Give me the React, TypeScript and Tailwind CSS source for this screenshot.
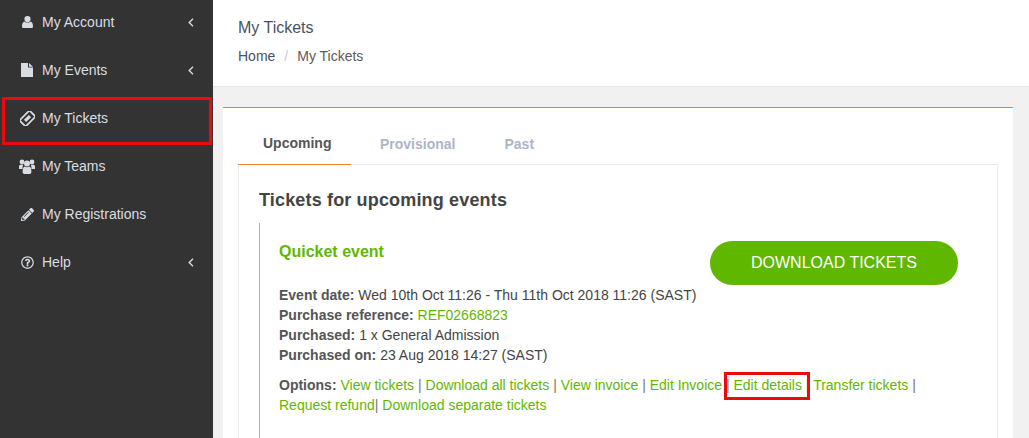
import React from 'react';
import { FaPencilAlt, FaRegQuestionCircle } from 'react-icons/fa';

const UserIcon = () => (
  <svg width="11" height="12" viewBox="0 0 11 12" fill="currentColor">
    <circle cx="5.5" cy="3.1" r="3.1" />
    <path d="M0 10.4C0 8 .7 5.9 2.3 5.4 3.2 6.2 4.3 6.6 5.5 6.6S7.8 6.2 8.7 5.4C10.3 5.9 11 8 11 10.4 11 11.4 10.3 12 9.4 12H1.6C.7 12 0 11.4 0 10.4Z" />
  </svg>
);

const FileIcon = () => (
  <svg width="12" height="14" viewBox="0 0 12 14" fill="currentColor">
    <path d="M0 0H7V4.6H12V14H0Z" />
    <path d="M8 0 12 3.7H8Z" />
  </svg>
);

const TicketIcon = () => (
  <svg width="15" height="15" viewBox="0 0 15 15">
    <g transform="rotate(-45 7.5 7.5)">
      <rect x="0.5" y="3.2" width="14" height="8.6" rx="1" fill="none" stroke="currentColor" strokeWidth="1.8" />
      <rect x="4" y="5.9" width="7" height="3.2" fill="currentColor" />
    </g>
  </svg>
);

const TeamIcon = () => (
  <svg width="16" height="15" viewBox="0 0 16 15" fill="currentColor">
    <circle cx="3" cy="3" r="2.4" />
    <circle cx="13" cy="3" r="2.4" />
    <path d="M0 10V7.5C0 6.3.8 5.8 2 5.8H4.2C3.6 7 3.4 8.5 3.6 10Z" />
    <path d="M16 10V7.5C16 6.3 15.2 5.8 14 5.8H11.8C12.4 7 12.6 8.5 12.4 10Z" />
    <circle cx="8" cy="4.6" r="3" />
    <path d="M3.6 13C3.6 9.8 4.4 7.8 5.8 7.6 7 8.6 9 8.6 10.2 7.6 11.6 7.8 12.4 9.8 12.4 13 12.4 14.2 11.6 15 10.6 15H5.4C4.4 15 3.6 14.2 3.6 13Z" />
  </svg>
);

const AngleLeft = () => (
  <svg className="ml-auto mr-[1px]" width="6" height="9" viewBox="0 0 6 9" fill="none" stroke="currentColor" strokeWidth="1.4">
    <path d="M5 .8 1.2 4.5 5 8.2" />
  </svg>
);

const menu = [
  { icon: <UserIcon />, label: 'My Account', arrow: true },
  { icon: <FileIcon />, label: 'My Events', arrow: true },
  { icon: <TicketIcon />, label: 'My Tickets', arrow: false, active: true },
  { icon: <TeamIcon />, label: 'My Teams', arrow: false },
  { icon: <FaPencilAlt className="text-[13px]" />, label: 'My Registrations', arrow: false },
  { icon: <FaRegQuestionCircle className="text-[13px]" />, label: 'Help', arrow: true },
];

const Sep = () => <span className="text-[#777]"> | </span>;

const App: React.FC = () => {
  return (
    <div className="flex h-[438px] w-[1029px] overflow-hidden bg-[#f1f1f1] font-['Liberation_Sans',Arial,sans-serif] text-[14px] text-[#444]">
      {/* Sidebar */}
      <aside className="w-[213px] shrink-0 bg-[#333333]">
        <ul className="-mt-[2px]">
          {menu.map((item) => (
            <li key={item.label} className="relative flex h-[48px] items-center pl-[19px] pr-[18px] text-[14px] text-[#d9dde3]">
              <span className="flex w-[23px] shrink-0 items-center justify-center pr-[7px]">{item.icon}</span>
              <span>{item.label}</span>
              {item.arrow && <AngleLeft />}
              {item.active && (
                <span className="absolute left-[2px] top-[3px] h-[48px] w-[210px] border-[3px] border-[#ee0a0a]" />
              )}
            </li>
          ))}
        </ul>
      </aside>

      <main className="min-w-0 flex-1">
        {/* Page header */}
        <header className="h-[87px] border-b border-[#e6e6e6] bg-white pl-[25px] pt-[17px]">
          <h1 className="text-[16px] leading-[22px] text-[#49525e]">My Tickets</h1>
          <nav className="mt-[7px] flex items-center leading-[20px]">
            <span className="text-[#49525e]">Home</span>
            <span className="mx-[9px] text-[#c8cbd0]">/</span>
            <span className="text-[#5f5a5a]">My Tickets</span>
          </nav>
        </header>

        {/* Portlet */}
        <section className="ml-[10px] mr-[16px] mt-[20px] h-[400px] border-t border-[#f08128] bg-white px-[15px] pt-[20px]">
          <div className="flex h-[37px] border-b border-[#e7ecf1] font-bold">
            <div className="-mb-px w-[113px] border-b border-[#f08128] pl-[25px] pt-[5px] text-[#555]">Upcoming</div>
            <div className="ml-[29px] pt-[6px] text-[#acb5c9]">Provisional</div>
            <div className="ml-[49px] pt-[6px] text-[#acb5c9]">Past</div>
          </div>

          <div className="h-[300px] border-x border-[#ececec] px-[20px] pt-[23px]">
            <h2 className="text-[18px] font-bold leading-[24px] tracking-[0.16px] text-[#444]">Tickets for upcoming events</h2>

            <div className="mt-[11px] h-[230px] border-l border-[#b5b5b5] pl-[19px] pt-[18px]">
              <div className="flex items-start justify-between pr-[19px]">
                <h3 className="text-[16px] font-bold leading-[22px] text-[#5fb700]">Quicket event</h3>
                <button className="h-[44px] w-[248px] rounded-full bg-[#5fb700] text-[16px] text-white">DOWNLOAD TICKETS</button>
              </div>

              <div className="leading-[20px]">
                <p><b className="text-[#555]">Event date:</b> Wed 10th Oct 11:26 - Thu 11th Oct 2018 11:26 (SAST)</p>
                <p><b className="text-[#555]">Purchase reference:</b> <a className="text-[#5fb700]">REF02668823</a></p>
                <p><b className="text-[#555]">Purchased:</b> 1 x General Admission</p>
                <p><b className="text-[#555]">Purchased on:</b> 23 Aug 2018 14:27 (SAST)</p>
              </div>

              <p className="mt-[10px] w-[660px] leading-[20px] text-[#5fb700]">
                <b className="text-[#555]">Options:</b> <a>View tickets</a><Sep /><a>Download all tickets</a><Sep /><a>View invoice</a><Sep /><a>Edit Invoice</a><Sep />
                <span className="relative">
                  <a>Edit details</a>
                  <span className="absolute left-[-9px] top-[-5px] h-[28px] w-[86px] border-[3px] border-[#ee0a0a]" />
                </span>
                <Sep /><a>Transfer tickets</a><Sep /><br />
                <a>Request refund</a><span className="text-[#777]">|</span> <a>Download separate tickets</a>
              </p>
            </div>
          </div>
        </section>
      </main>
    </div>
  );
};

export default App;
